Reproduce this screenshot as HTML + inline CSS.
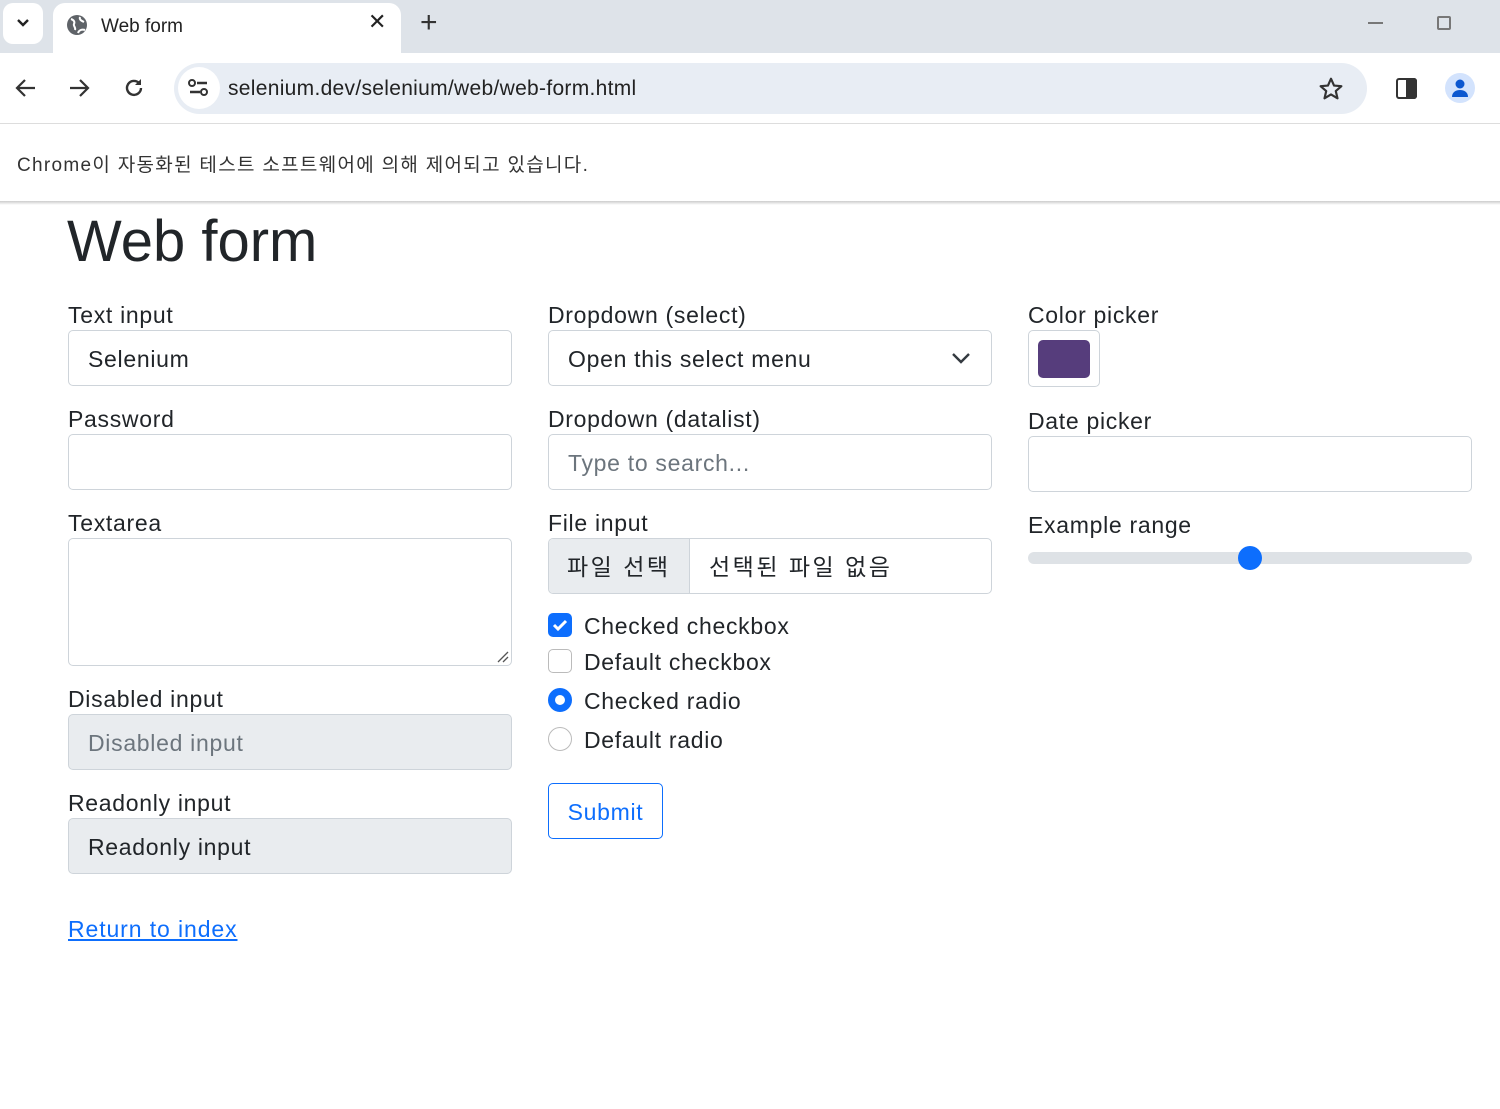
<!DOCTYPE html>
<html><head><meta charset="utf-8"><style>
*{box-sizing:border-box;margin:0;padding:0}
body{width:1500px;height:1109px;position:relative;background:#fff;font-family:"Liberation Sans","Noto Sans CJK KR",sans-serif;color:#212529;overflow:hidden}
.a{position:absolute}
.lbl{position:absolute;font-size:23px;line-height:30px;color:#212529;letter-spacing:0.7px}
.inp{position:absolute;width:444px;height:56px;border:1px solid #ced4da;border-radius:5px;background:#fff;font-size:23px;line-height:56px;padding-left:19px;letter-spacing:0.7px}
.ck{position:absolute;font-size:23px;line-height:30px;letter-spacing:0.7px}
</style></head><body>
<!-- tab strip -->
<div class="a" style="left:0;top:0;width:1500px;height:53px;background:#dee3e9"></div>
<div class="a" style="left:3px;top:3px;width:40px;height:41px;background:#fff;border-radius:10px"></div>
<svg class="a" style="left:15px;top:17px" width="16" height="12"><path d="M3 3l5 5 5-5" stroke="#222" stroke-width="2.4" fill="none"/></svg>
<div class="a" style="left:53px;top:3px;width:348px;height:52px;background:#fff;border-radius:12px 12px 0 0"></div>
<svg class="a" style="left:66px;top:14px" width="22" height="22" viewBox="0 0 22 22"><circle cx="11" cy="11" r="10" fill="#5f6368"/><path d="M5 5c3 1 4 3 3 5s2 3 1 6M14 3c-1 3 2 4 4 5M12 19c1-3 4-4 7-3" stroke="#fff" stroke-width="2" fill="none"/></svg>
<div class="a" style="left:101px;top:16px;font-size:19px;color:#222">Web form</div>
<div class="a" style="left:368px;top:9px;font-size:22px;color:#222">✕</div>
<div class="a" style="left:420px;top:6px;font-size:30px;color:#333">+</div>
<div class="a" style="left:1368px;top:22px;width:15px;height:2px;background:#777"></div>
<div class="a" style="left:1437px;top:16px;width:14px;height:14px;border:2px solid #777;border-radius:2px"></div>
<!-- toolbar -->
<svg class="a" style="left:14px;top:77px" width="24" height="22"><path d="M21 11H4M11 3l-8 8 8 8" stroke="#333" stroke-width="2.2" fill="none"/></svg>
<svg class="a" style="left:67px;top:77px" width="24" height="22"><path d="M3 11h17M13 3l8 8-8 8" stroke="#333" stroke-width="2.2" fill="none"/></svg>
<svg class="a" style="left:122px;top:76px" width="24" height="24"><path d="M19 12a7 7 0 1 1-2-5" stroke="#333" stroke-width="2.4" fill="none"/><path d="M19 3v6h-6z" fill="#333"/></svg>
<div class="a" style="left:174px;top:63px;width:1193px;height:51px;background:#e8edf4;border-radius:26px"></div>
<div class="a" style="left:178px;top:67px;width:42px;height:42px;background:#fff;border-radius:50%"></div>
<svg class="a" style="left:188px;top:78px" width="22" height="20"><circle cx="4" cy="5" r="3" stroke="#333" stroke-width="2" fill="none"/><path d="M9 5h10M2 14h10" stroke="#333" stroke-width="2.4"/><circle cx="16" cy="14" r="3" stroke="#333" stroke-width="2" fill="none"/></svg>
<div class="a" style="left:228px;top:77px;font-size:21px;color:#222;letter-spacing:0.3px">selenium.dev/selenium/web/web-form.html</div>
<svg class="a" style="left:1318px;top:76px" width="26" height="26" viewBox="0 0 24 24"><path d="M12 2.5l2.8 6.3 6.8.6-5.2 4.5 1.6 6.7L12 17l-6 3.6 1.6-6.7-5.2-4.5 6.8-.6z" stroke="#333" stroke-width="2" fill="none" stroke-linejoin="round"/></svg>
<div class="a" style="left:1396px;top:78px;width:21px;height:21px;border:2.5px solid #333;border-radius:3px"></div>
<div class="a" style="left:1406px;top:78px;width:11px;height:21px;background:#333;border-radius:0 3px 3px 0"></div>
<div class="a" style="left:1445px;top:73px;width:30px;height:30px;background:#d3e3fd;border-radius:50%"></div>
<svg class="a" style="left:1449px;top:77px" width="22" height="22"><circle cx="11" cy="7" r="4.5" fill="#0b57d0"/><path d="M3 20c0-5 4-7 8-7s8 2 8 7z" fill="#0b57d0"/></svg>
<div class="a" style="left:0;top:123px;width:1500px;height:1px;background:#ddd"></div>
<div class="a" style="left:17px;top:150px;font-size:19px;color:#333;letter-spacing:1.3px">Chrome이 자동화된 테스트 소프트웨어에 의해 제어되고 있습니다.</div>
<div class="a" style="left:0;top:201px;width:1500px;height:4px;background:linear-gradient(#ccc,#fff)"></div>
<!-- page -->
<div class="a" style="left:67px;top:207px;font-size:58px;line-height:70px;font-weight:300;color:#212529">Web form</div>

<div class="lbl" style="left:68px;top:300px">Text input</div>
<div class="inp" style="left:68px;top:330px">Selenium</div>
<div class="lbl" style="left:68px;top:404px">Password</div>
<div class="inp" style="left:68px;top:434px"></div>
<div class="lbl" style="left:68px;top:508px">Textarea</div>
<div class="inp" style="left:68px;top:538px;height:128px"></div>
<svg class="a" style="left:496px;top:650px" width="13" height="13"><path d="M12 2L2 12M12 7L7 12" stroke="#555" stroke-width="1.3"/></svg>
<div class="lbl" style="left:68px;top:684px">Disabled input</div>
<div class="inp" style="left:68px;top:714px;background:#e9ecef;color:#6c757d">Disabled input</div>
<div class="lbl" style="left:68px;top:788px">Readonly input</div>
<div class="inp" style="left:68px;top:818px;background:#e9ecef">Readonly input</div>
<div class="a" style="left:68px;top:916px;font-size:23px;color:#0d6efd;text-decoration:underline;letter-spacing:0.9px">Return to index</div>

<div class="lbl" style="left:548px;top:300px">Dropdown (select)</div>
<div class="inp" style="left:548px;top:330px">Open this select menu</div>
<svg class="a" style="left:951px;top:351px" width="20" height="14"><path d="M2 3l8 8 8-8" stroke="#343a40" stroke-width="2.4" fill="none"/></svg>
<div class="lbl" style="left:548px;top:404px">Dropdown (datalist)</div>
<div class="inp" style="left:548px;top:434px;color:#6c757d">Type to search...</div>
<div class="lbl" style="left:548px;top:508px">File input</div>
<div class="inp" style="left:548px;top:538px;padding:0;overflow:hidden;letter-spacing:2.5px"><span class="a" style="left:0;top:0;width:141px;height:54px;background:#e9ecef;border-right:1px solid #ced4da;padding-left:18px">파일 선택</span><span class="a" style="left:160px;top:0">선택된 파일 없음</span></div>
<div class="a" style="left:548px;top:613px;width:24px;height:24px;background:#0d6efd;border-radius:5px"></div>
<svg class="a" style="left:548px;top:613px" width="24" height="24"><path d="M6 12l4 4 8-8" stroke="#fff" stroke-width="3" fill="none"/></svg>
<div class="ck" style="left:584px;top:611px">Checked checkbox</div>
<div class="a" style="left:548px;top:649px;width:24px;height:24px;border:1px solid #bbb;border-radius:5px"></div>
<div class="ck" style="left:584px;top:647px">Default checkbox</div>
<div class="a" style="left:548px;top:688px;width:24px;height:24px;border:7px solid #0d6efd;border-radius:50%;background:#fff"></div>
<div class="ck" style="left:584px;top:686px">Checked radio</div>
<div class="a" style="left:548px;top:727px;width:24px;height:24px;border:1px solid #bbb;border-radius:50%"></div>
<div class="ck" style="left:584px;top:725px">Default radio</div>
<div class="a" style="left:548px;top:783px;width:115px;height:56px;border:1px solid #0d6efd;border-radius:5px;color:#0d6efd;font-size:23px;line-height:56px;text-align:center;letter-spacing:0.7px">Submit</div>

<div class="lbl" style="left:1028px;top:300px">Color picker</div>
<div class="a" style="left:1028px;top:330px;width:72px;height:57px;border:1px solid #ced4da;border-radius:5px"></div>
<div class="a" style="left:1038px;top:340px;width:52px;height:38px;background:#563d7c;border-radius:5px"></div>
<div class="lbl" style="left:1028px;top:406px">Date picker</div>
<div class="inp" style="left:1028px;top:436px"></div>
<div class="lbl" style="left:1028px;top:510px">Example range</div>
<div class="a" style="left:1028px;top:552px;width:444px;height:12px;background:#dee2e6;border-radius:6px"></div>
<div class="a" style="left:1238px;top:546px;width:24px;height:24px;background:#0d6efd;border-radius:50%"></div>
</body></html>
